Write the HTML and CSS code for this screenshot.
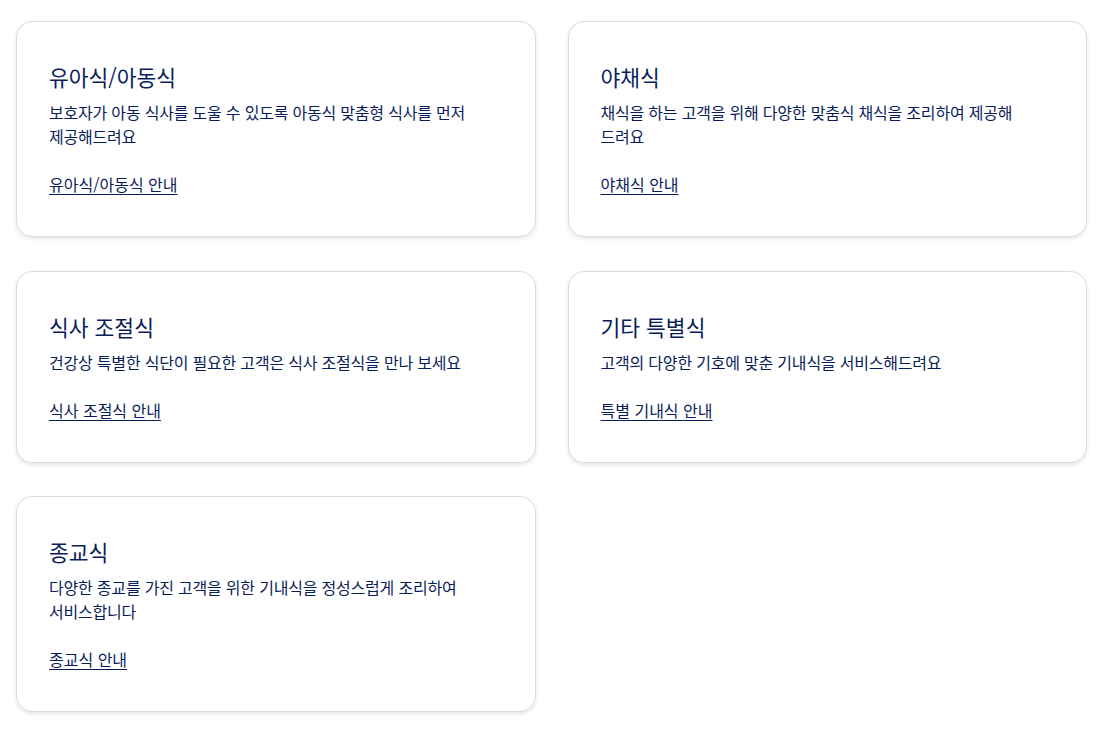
FILE: index.html
```html
<!DOCTYPE html>
<html lang="ko">
<head>
<meta charset="utf-8">
<link rel="stylesheet" href="styles.css">
</head>
<body>
<main class="grid">
  <section class="card">
    <h2 class="card-title">유아식/아동식</h2>
    <p class="card-desc">보호자가 아동 식사를 도울 수 있도록 아동식 맞춤형 식사를 먼저 제공해드려요</p>
    <a class="card-link" href="#">유아식/아동식 안내</a>
  </section>
  <section class="card">
    <h2 class="card-title">야채식</h2>
    <p class="card-desc">채식을 하는 고객을 위해 다양한 맞춤식 채식을 조리하여 제공해드려요</p>
    <a class="card-link" href="#">야채식 안내</a>
  </section>
  <section class="card">
    <h2 class="card-title">식사 조절식</h2>
    <p class="card-desc">건강상 특별한 식단이 필요한 고객은 식사 조절식을 만나 보세요</p>
    <a class="card-link" href="#">식사 조절식 안내</a>
  </section>
  <section class="card">
    <h2 class="card-title">기타 특별식</h2>
    <p class="card-desc">고객의 다양한 기호에 맞춘 기내식을 서비스해드려요</p>
    <a class="card-link" href="#">특별 기내식 안내</a>
  </section>
  <section class="card">
    <h2 class="card-title">종교식</h2>
    <p class="card-desc">다양한 종교를 가진 고객을 위한 기내식을 정성스럽게 조리하여 서비스합니다</p>
    <a class="card-link" href="#">종교식 안내</a>
  </section>
</main>
</body>
</html>
```

FILE: styles.css
```css
* { box-sizing: border-box; }
html, body { margin: 0; padding: 0; background: #ffffff; }
body {
  font-family: "Noto Sans CJK KR", "Noto Sans", sans-serif;
  color: #0a1d5b;
}
.grid {
  display: grid;
  grid-template-columns: 1fr 1fr;
  column-gap: 32px;
  row-gap: 33.5px;
  padding: 21px 16px 20px 16px;
  align-items: start;
}
.card {
  display: flex;
  flex-direction: column;
  align-items: flex-start;
  background: #fff;
  border: 1px solid #dcdcdc;
  border-radius: 16px;
  box-shadow: 0 2px 4px rgba(0, 0, 0, 0.10);
  padding: 40px 32px 40px 32px;
}
.card-title {
  margin: 0;
  font-size: 21.5px;
  line-height: 30px;
  font-weight: 400;
}
.card-desc {
  margin: 8px 0 0 0;
  font-size: 16px;
  line-height: 24px;
  letter-spacing: -0.2px;
  max-width: 420px;
}
.card-link {
  margin-top: 24px;
  font-size: 16px;
  line-height: 24px;
  color: #0a1d5b;
  text-decoration: underline;
  text-underline-offset: 3px;
}
```
